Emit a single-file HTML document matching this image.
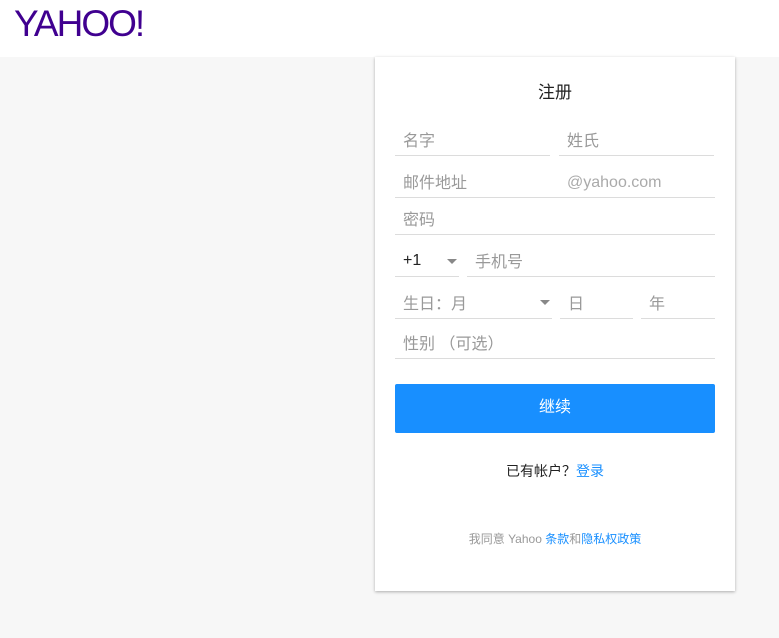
<!DOCTYPE html><html><head><meta charset="utf-8"><style>
*{margin:0;padding:0;box-sizing:border-box}
body{width:779px;height:638px;background:#f7f7f7;font-family:"Liberation Sans","Noto Sans CJK SC",sans-serif;position:relative;overflow:hidden}
.hd{position:absolute;left:0;top:0;width:779px;height:57px;background:#fff}
.logo{position:absolute;left:14px;top:3px;font-size:37px;color:#400090;letter-spacing:-2px}
.card{position:absolute;left:375px;top:57px;width:360px;height:534px;background:#fff;box-shadow:0 1px 3px rgba(0,0,0,.3)}
.t{position:absolute;font-size:16px;color:#999}
.l{position:absolute;height:1px;background:#dcdcdc}
.ttl{position:absolute;text-align:center;top:78px;font-size:17px;color:#222}
.arr{position:absolute;width:0;height:0;border-left:5px solid transparent;border-right:5px solid transparent;border-top:5px solid #888}
.btn{position:absolute;left:395px;top:384px;width:320px;height:49px;background:#188fff;border-radius:2px;color:#fff;font-size:16px;text-align:center;line-height:49px}
</style></head><body>
<div class="hd"><div class="logo">YAHOO!</div></div>
<div class="card"></div>
<div class="ttl" style="left:375px;width:360px">注册</div>
<div class="t" style="left:403px;top:127px">名字</div><div class="t" style="left:567px;top:127px">姓氏</div>
<div class="l" style="left:395px;top:155px;width:155px"></div><div class="l" style="left:559px;top:155px;width:155px"></div>
<div class="t" style="left:403px;top:169px">邮件地址</div><div class="t" style="left:567px;top:174px;color:#aaa">@yahoo.com</div>
<div class="l" style="left:395px;top:197px;width:320px"></div>
<div class="t" style="left:403px;top:206px">密码</div>
<div class="l" style="left:395px;top:234px;width:320px"></div>
<div class="t" style="left:403px;top:252px;color:#222">+1</div><div class="arr" style="left:447px;top:259px"></div>
<div class="t" style="left:475px;top:248px">手机号</div>
<div class="l" style="left:395px;top:276px;width:64px"></div><div class="l" style="left:467px;top:276px;width:248px"></div>
<div class="t" style="left:403px;top:290px">生日：月</div><div class="arr" style="left:540px;top:300px"></div>
<div class="t" style="left:568px;top:290px">日</div><div class="t" style="left:649px;top:290px">年</div>
<div class="l" style="left:395px;top:318px;width:157px"></div><div class="l" style="left:560px;top:318px;width:73px"></div><div class="l" style="left:641px;top:318px;width:74px"></div>
<div class="t" style="left:403px;top:330px">性别 （可选）</div>
<div class="l" style="left:395px;top:358px;width:320px"></div>
<div class="btn" style="line-height:47px">继续</div>
<div style="position:absolute;left:375px;width:360px;top:461px;text-align:center;font-size:14px;color:#222">已有帐户？<span style="color:#188fff">登录</span></div>
<div style="position:absolute;left:375px;width:360px;top:530px;text-align:center;font-size:12px;color:#999">我同意 Yahoo <span style="color:#188fff">条款</span>和<span style="color:#188fff">隐私权政策</span></div>
</body></html>
